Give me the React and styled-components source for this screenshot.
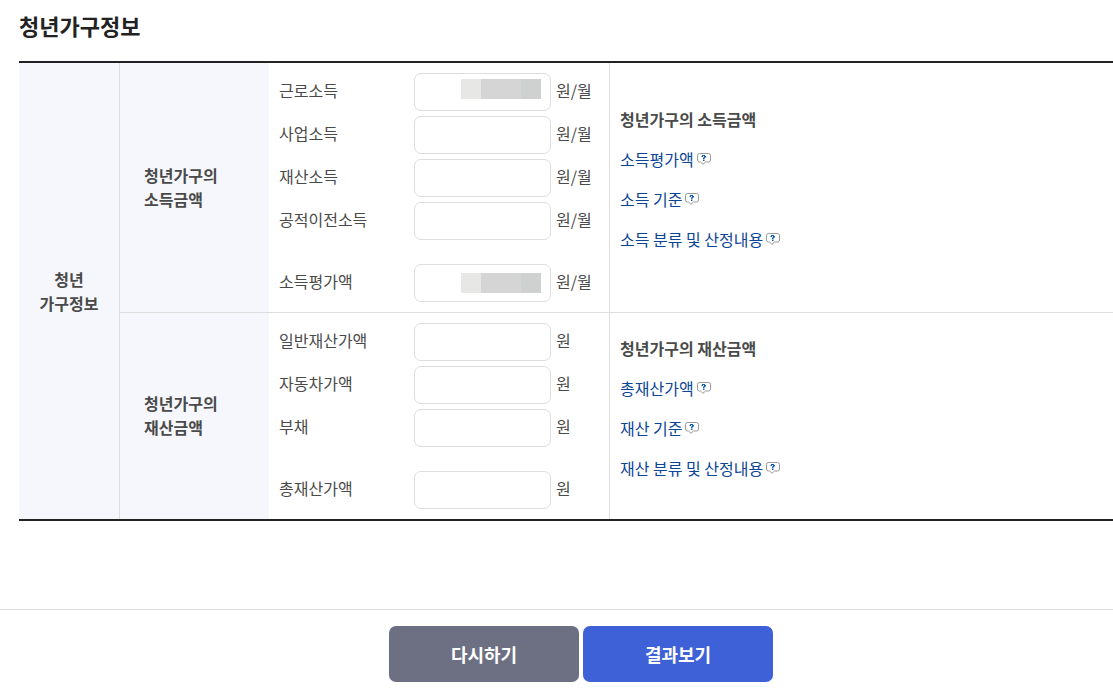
import React from "react";
import styled, { createGlobalStyle } from "styled-components";

const sections = [
  {
    id: "income",
    name: ["청년가구의", "소득금액"],
    unit: "원/월",
    fields: [
      { id: "earned", label: "근로소득", masked: "top" },
      { id: "business", label: "사업소득" },
      { id: "property", label: "재산소득" },
      { id: "transfer", label: "공적이전소득" },
    ],
    total: { id: "incomeTotal", label: "소득평가액", masked: "center" },
    guideTitle: "청년가구의 소득금액",
    guides: ["소득평가액", "소득 기준", "소득 분류 및 산정내용"],
  },
  {
    id: "asset",
    name: ["청년가구의", "재산금액"],
    unit: "원",
    fields: [
      { id: "general", label: "일반재산가액" },
      { id: "car", label: "자동차가액" },
      { id: "debt", label: "부채" },
    ],
    total: { id: "assetTotal", label: "총재산가액" },
    guideTitle: "청년가구의 재산금액",
    guides: ["총재산가액", "재산 기준", "재산 분류 및 산정내용"],
  },
];

const HelpIcon = () => (
  <HelpSvg viewBox="0 0 14 12" aria-hidden="true">
    <path
      d="M2.5 .5h9a2 2 0 0 1 2 2v4.500a2 2 0 0 1-2 2H8.500L6 11.300 3.500 9h-1a2 2 0 0 1-2-2V2.500a2 2 0 0 1 2-2z"
      fill="#fff"
      stroke="#999"
    />
    <path
      d="M5 2h3v1h1v1.500H8v1H7V6H6V4.500h1V3H6v1H4.500V3H5zM6 6.500h1.500V8H6z"
      fill="#0a5cb8"
    />
  </HelpSvg>
);

const Field = ({ field, unit, total }) => (
  <FieldRow $total={total}>
    <FieldLabel htmlFor={field.id}>{field.label}</FieldLabel>
    <FieldInput id={field.id} type="text" $masked={field.masked} />
    <Unit>{unit}</Unit>
  </FieldRow>
);

const App = () => {
  return (
    <>
      <GlobalStyle />
      <Content>
        <Heading>청년가구정보</Heading>
        <InfoTable>
          <colgroup>
            <Col $width="101px" />
            <Col $width="149px" />
            <Col $width="341px" />
            <Col />
          </colgroup>
          <tbody>
            {sections.map((section, index) => (
              <tr key={section.id}>
                {index === 0 && (
                  <GroupHead scope="rowgroup" rowSpan={sections.length}>
                    청년
                    <br />
                    가구정보
                  </GroupHead>
                )}
                <SectionHead scope="row" $last={index === 1}>
                  {section.name[0]}
                  <br />
                  {section.name[1]}
                </SectionHead>
                <FieldCell $last={index === 1}>
                  {section.fields.map((field) => (
                    <Field key={field.id} field={field} unit={section.unit} />
                  ))}
                  <Field field={section.total} unit={section.unit} total />
                </FieldCell>
                <GuideCell $last={index === 1}>
                  <GuideTitle>{section.guideTitle}</GuideTitle>
                  {section.guides.map((guide) => (
                    <GuideItem key={guide}>
                      <GuideLink href="#">
                        {guide}
                        <HelpIcon />
                      </GuideLink>
                    </GuideItem>
                  ))}
                </GuideCell>
              </tr>
            ))}
          </tbody>
        </InfoTable>
      </Content>
      <Footer>
        <ActionButton type="button">다시하기</ActionButton>
        <ActionButton type="button" $primary>
          결과보기
        </ActionButton>
      </Footer>
    </>
  );
};

const GlobalStyle = createGlobalStyle`
  * {
    box-sizing: border-box;
  }
  body {
    margin: 0;
    background: #fff;
    color: #4a4a4a;
    font-family: "Noto Sans CJK KR", "Noto Sans", sans-serif;
    font-size: 16px;
    line-height: 24px;
  }
  button, input {
    font-family: inherit;
  }
`;

const Content = styled.main`
  padding: 9px 0 0 19px;
`;

const Heading = styled.h2`
  margin: 0 0 20px;
  color: #222;
  font-size: 22px;
  font-weight: 700;
  line-height: 32px;
`;

const InfoTable = styled.table`
  width: 100%;
  table-layout: fixed;
  border-spacing: 0;
  border-top: 2px solid #222;
  border-bottom: 2px solid #222;
`;

const Col = styled.col`
  width: ${({ $width }) => $width || "auto"};
`;

const HeadCell = styled.th`
  background: #f6f7fc;
  font-weight: 700;
  vertical-align: middle;
`;

const GroupHead = styled(HeadCell)`
  padding: 0;
  border-right: 1px solid #ddd;
  text-align: center;
`;

const SectionHead = styled(HeadCell)`
  padding: 0 0 2px 24px;
  border-bottom: ${({ $last }) => ($last ? "0" : "1px solid #ddd")};
  text-align: left;
`;

const FieldCell = styled.td`
  padding: 10px;
  border-right: 1px solid #ddd;
  border-bottom: ${({ $last }) => ($last ? "0" : "1px solid #ddd")};
`;

const GuideCell = styled.td`
  padding: 0 10px 17px;
  border-bottom: ${({ $last }) => ($last ? "0" : "1px solid #ddd")};
  vertical-align: middle;
`;

const FieldRow = styled.div`
  display: flex;
  align-items: center;
  margin-top: ${({ $total }) => ($total ? "24px" : "5px")};
  &:first-child {
    margin-top: 0;
  }
`;

const FieldLabel = styled.label`
  flex: 0 0 135px;
  padding-bottom: 4px;
`;

const FieldInput = styled.input`
  width: 137px;
  height: 38px;
  padding: 0 9px;
  border: 1px solid #ddd;
  border-radius: 7px;
  background-color: #fff;
  font-size: 16px;
  text-align: right;
  ${({ $masked }) =>
    $masked &&
    `
    background-image: linear-gradient(
      to right,
      #e7e7e6 20px,
      #d5d5d5 20px 60px,
      #cfd0d0 60px
    );
    background-repeat: no-repeat;
    background-size: 80px 20px;
    background-position: right 9px ${$masked === "top" ? "top 5px" : "center"};
  `}
`;

const Unit = styled.span`
  margin-left: 5px;
  padding-bottom: 4px;
`;

const GuideTitle = styled.strong`
  display: block;
  line-height: 40px;
`;

const GuideItem = styled.div`
  line-height: 40px;
`;

const GuideLink = styled.a`
  color: #0b4596;
  text-decoration: none;
`;

const HelpSvg = styled.svg`
  width: 14px;
  height: 12px;
  margin-left: 3px;
  vertical-align: 1px;
`;

const Footer = styled.footer`
  display: flex;
  justify-content: center;
  gap: 4px;
  margin-top: 88px;
  padding: 16px 0 16px 49px;
  border-top: 1px solid #ddd;
`;

const ActionButton = styled.button`
  width: 190px;
  height: 56px;
  border: 0;
  border-radius: 7px;
  background: ${({ $primary }) => ($primary ? "#3e61d8" : "#6d7083")};
  color: #fff;
  font-size: 18px;
  font-weight: 700;
  cursor: pointer;
`;

export default App;
